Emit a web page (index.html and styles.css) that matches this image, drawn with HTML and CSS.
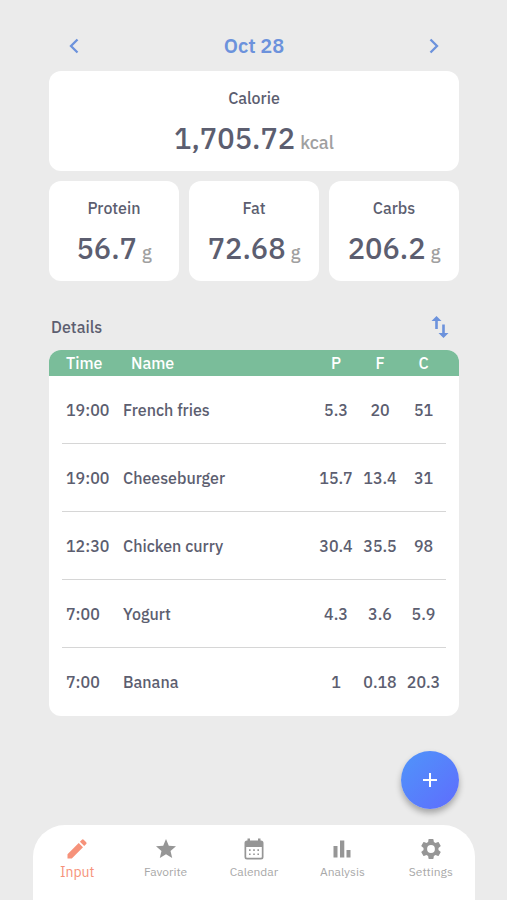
FILE: index.html
```html
<!DOCTYPE html>
<html lang="en">
<head>
<meta charset="utf-8">
<meta name="viewport" content="width=device-width, initial-scale=1">
<title>Oct 28</title>
<link rel="stylesheet" href="styles.css">
</head>
<body>
<main class="content">
  <header class="date-bar">
    <button class="icon-button" type="button" aria-label="Previous day">
      <svg width="24" height="24" viewBox="0 0 24 24" fill="none" stroke="currentColor" stroke-width="2.3"><path d="M15.500 5.500L9 12l6.500 6.500"/></svg>
    </button>
    <h1 class="date">Oct 28</h1>
    <button class="icon-button" type="button" aria-label="Next day">
      <svg width="24" height="24" viewBox="0 0 24 24" fill="none" stroke="currentColor" stroke-width="2.3"><path d="M8.500 5.500L15 12l-6.500 6.500"/></svg>
    </button>
  </header>

  <section class="summary">
    <div class="card card-wide"><h2 class="label">Calorie</h2><p class="amount"><span>1,705.72</span> <span class="unit">kcal</span></p></div>
    <div class="card"><h2 class="label">Protein</h2><p class="amount"><span>56.7</span> <span class="unit">g</span></p></div>
    <div class="card"><h2 class="label">Fat</h2><p class="amount"><span>72.68</span> <span class="unit">g</span></p></div>
    <div class="card"><h2 class="label">Carbs</h2><p class="amount"><span>206.2</span> <span class="unit">g</span></p></div>
  </section>

  <section class="details">
    <div class="details-head">
      <h2 class="label">Details</h2>
      <button class="icon-button sort" type="button" aria-label="Sort">
        <svg width="24" height="24" viewBox="0 0 24 24" fill="none" stroke="currentColor" stroke-width="2.6"><path d="M8.500 14V4M15.500 9.500v10"/><path d="M3.500 6l5-5 5 5zM10.500 18l5 5 5-5z" fill="currentColor" stroke="none"/></svg>
      </button>
    </div>
    <table class="meals">
      <thead>
        <tr><th class="time" scope="col">Time</th><th class="name" scope="col">Name</th><th class="value" scope="col">P</th><th class="value" scope="col">F</th><th class="value last" scope="col">C</th></tr>
      </thead>
      <tbody>
        <tr><td class="time">19:00</td><td>French fries</td><td class="value">5.3</td><td class="value">20</td><td class="value last">51</td></tr>
        <tr><td class="time">19:00</td><td>Cheeseburger</td><td class="value">15.7</td><td class="value">13.4</td><td class="value last">31</td></tr>
        <tr><td class="time">12:30</td><td>Chicken curry</td><td class="value">30.4</td><td class="value">35.5</td><td class="value last">98</td></tr>
        <tr><td class="time">7:00</td><td>Yogurt</td><td class="value">4.3</td><td class="value">3.6</td><td class="value last">5.9</td></tr>
        <tr><td class="time">7:00</td><td>Banana</td><td class="value">1</td><td class="value">0.18</td><td class="value last">20.3</td></tr>
      </tbody>
    </table>
  </section>

  <button class="add" type="button" aria-label="Add meal">
    <svg width="24" height="24" viewBox="0 0 24 24" fill="none" stroke="currentColor" stroke-width="2"><path d="M12 5v14M5 12h14"/></svg>
  </button>
</main>

<nav class="tabs">
  <a class="tab active" href="#input" aria-current="page">
    <svg width="24" height="24" viewBox="0 0 24 24" fill="currentColor"><path d="M2.500 17.200V21.500h4.300L18 10.300 13.700 6zM21.200 7.100a1.300 1.300 0 0 0 0-1.800l-2.500-2.500a1.300 1.300 0 0 0-1.800 0l-2 2 4.300 4.300z"/></svg>
    <span>Input</span>
  </a>
  <a class="tab" href="#favorite">
    <svg width="24" height="24" viewBox="0 0 24 24" fill="currentColor"><path d="M12 17.270L18.180 21l-1.640-7.030L22 9.240l-7.190-.61L12 2 9.190 8.630 2 9.240l5.460 4.730L5.820 21z"/></svg>
    <span>Favorite</span>
  </a>
  <a class="tab" href="#calendar">
    <svg width="24" height="24" viewBox="0 0 24 24" fill="currentColor"><path fill-rule="evenodd" d="M5.500 1.500H8v2h8v-2h2.500v2H19a2.500 2.500 0 0 1 2.500 2.500v14a2.500 2.500 0 0 1-2.500 2.500H5A2.500 2.500 0 0 1 2.500 20V6A2.500 2.500 0 0 1 5 3.500h.5zM4.200 10v9.800c0 .6.400 1 1 1h13.600c.6 0 1-.4 1-1V10z"/><path d="M7 12.300h1.600v1.600H7zM11.200 12.300h1.600v1.600h-1.600zM15.400 12.300H17v1.600h-1.600zM7 16.500h1.600v1.600H7zM11.200 16.500h1.600v1.600h-1.600zM15.400 16.500H17v1.600h-1.600z"/></svg>
    <span>Calendar</span>
  </a>
  <a class="tab" href="#analysis">
    <svg width="24" height="24" viewBox="0 0 24 24" fill="currentColor"><path d="M3.500 9h4v11.500h-4zM10 3.500h4.300v17H10zM16.500 13h4v7.500h-4z"/></svg>
    <span>Analysis</span>
  </a>
  <a class="tab" href="#settings">
    <svg width="24" height="24" viewBox="0 0 24 24" fill="currentColor"><path d="M19.430 12.980c.04-.32.07-.64.07-.98s-.03-.66-.07-.98l2.110-1.650c.19-.15.24-.42.12-.64l-2-3.460c-.12-.22-.39-.3-.61-.22l-2.490 1c-.52-.4-1.080-.73-1.690-.98l-.38-2.650A.49.49 0 0 0 14 2h-4c-.25 0-.46.18-.49.42l-.38 2.650c-.61.25-1.170.59-1.690.98l-2.490-1c-.23-.09-.49 0-.61.22l-2 3.460c-.13.22-.07.49.12.64l2.110 1.650c-.04.32-.07.65-.07.98s.03.66.07.98l-2.110 1.650c-.19.15-.24.42-.12.64l2 3.460c.12.22.39.3.61.22l2.490-1c.52.4 1.080.73 1.690.98l.38 2.650c.03.24.24.42.49.42h4c.25 0 .46-.18.49-.42l.38-2.650c.61-.25 1.170-.59 1.690-.98l2.490 1c.23.09.49 0 .61-.22l2-3.460c.12-.22.07-.49-.12-.64zM12 15.900a3.900 3.900 0 1 1 0-7.800 3.900 3.900 0 0 1 0 7.800z"/></svg>
    <span>Settings</span>
  </a>
</nav>
</body>
</html>
```
FILE: styles.css
```css
* {
  box-sizing: border-box;
}

body {
  display: flex;
  flex-direction: column;
  min-height: 100vh;
  margin: 0;
  background: #ebebeb;
  color: #5c5e70;
  font: 500 16px/24px "IBM Plex Sans", Roboto, sans-serif;
}

h1,
h2,
p {
  margin: 0;
}

button {
  padding: 0;
  border: 0;
  background: none;
  font: inherit;
  cursor: pointer;
}

svg {
  display: block;
}

.content {
  display: flex;
  flex-direction: column;
  padding: 32px 48px 16px 49px;
}

.date-bar {
  display: flex;
  align-items: center;
  justify-content: space-between;
  height: 28px;
  margin-bottom: 11px;
  padding: 0 13px;
}

.icon-button {
  color: #6c92dc;
}

.date {
  color: #6c92dc;
  font-size: 20px;
  font-weight: 600;
}

.summary {
  display: grid;
  grid-template-columns: repeat(3, 1fr);
  gap: 10px;
}

.card {
  padding: 15px 0;
  border-radius: 12px;
  background: #fff;
  text-align: center;
}

.card-wide {
  grid-column: 1 / -1;
}

.label {
  font-size: 16px;
  font-weight: 500;
}

.amount {
  display: flex;
  align-items: baseline;
  justify-content: center;
  gap: 5px;
  height: 36px;
  margin-top: 10px;
  font-size: 29px;
  line-height: 36px;
  white-space: nowrap;
}

.unit {
  color: #a0a0a0;
  font-size: 18px;
  line-height: 24px;
}

.details {
  margin-top: 34px;
}

.details-head {
  display: flex;
  align-items: center;
  justify-content: space-between;
  margin-bottom: 11px;
  padding: 0 7px 0 2px;
}

.meals {
  width: 100%;
  overflow: hidden;
  border-radius: 12px;
  border-spacing: 0;
  background: #fff;
  table-layout: fixed;
}

.meals th,
.meals td {
  height: 68px;
  padding: 0;
  font-weight: 500;
  text-align: left;
}

.meals th {
  height: 26px;
  background: #7abd9a;
  color: #fff;
}

.meals .time {
  width: 74px;
  padding-left: 17px;
}

.meals .name {
  padding-left: 8px;
}

.meals .value {
  width: 44px;
  text-align: center;
}

.meals .last {
  width: 57px;
  padding-right: 14px;
}

.meals tbody tr:not(:last-child) {
  background: linear-gradient(#d6d6d6, #d6d6d6) center bottom / calc(100% - 26px) 1px no-repeat;
}

.add {
  display: grid;
  place-items: center;
  align-self: flex-end;
  width: 58px;
  height: 58px;
  margin-top: 35px;
  border-radius: 50%;
  background: linear-gradient(135deg, #4f95fa, #5f6cfd);
  box-shadow: 0 4px 6px #0000004d;
  color: #fff;
}

.tabs {
  display: grid;
  grid-template-columns: repeat(5, 1fr);
  height: 75px;
  margin: auto 32px 0 33px;
  padding-top: 12px;
  border-radius: 32px 32px 0 0;
  background: #fff;
}

.tab {
  display: flex;
  flex-direction: column;
  align-items: center;
  color: #969696;
  font-size: 12px;
  font-weight: 400;
  line-height: 22px;
  text-decoration: none;
}

.tab span {
  color: #a8a8a8;
}

.tab.active,
.tab.active span {
  color: #f6927a;
}

.tab.active {
  font-size: 14px;
}
```
